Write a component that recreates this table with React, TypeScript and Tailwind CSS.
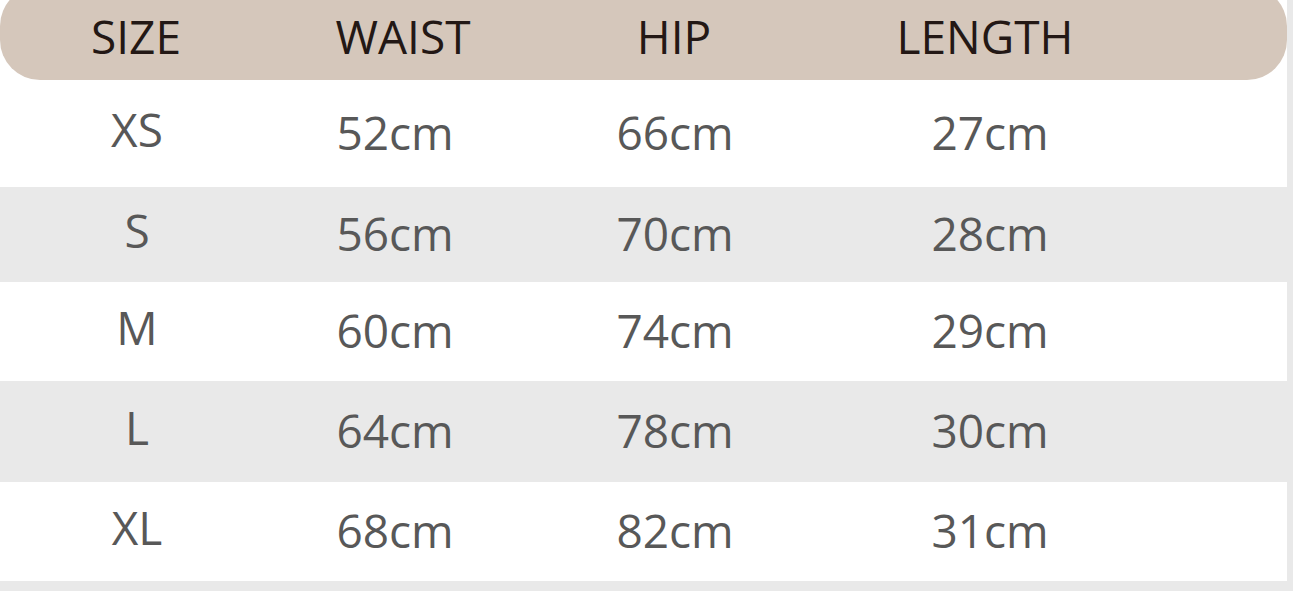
const rows = [
  { size: "XS", waist: "52cm", hip: "66cm", length: "27cm", h: "h-[107px]", bg: "bg-white" },
  { size: "S", waist: "56cm", hip: "70cm", length: "28cm", h: "h-[95px]", bg: "bg-[#e9e9e9]" },
  { size: "M", waist: "60cm", hip: "74cm", length: "29cm", h: "h-[99px]", bg: "bg-white" },
  { size: "L", waist: "64cm", hip: "78cm", length: "30cm", h: "h-[101px]", bg: "bg-[#e9e9e9]" },
  { size: "XL", waist: "68cm", hip: "82cm", length: "31cm", h: "h-[99px]", bg: "bg-white" },
];

export default function App() {
  return (
    <div className="h-[591px] w-[1293px] overflow-hidden bg-[#e9e9e9] font-['Open_Sans','Noto_Sans',sans-serif]">
      <div className="w-[1287px] bg-white">
        {/* header pill, top runs off the picture */}
        <div className="-mt-[14px] grid h-[94px] grid-cols-[272px_262px_280px_342px] items-center rounded-[40px] bg-[#d5c7bb] pt-[6px] text-[46px] leading-none text-[#231815]">
          <span className="text-center">SIZE</span>
          <span className="text-center">WAIST</span>
          <span className="text-center">HIP</span>
          <span className="text-center">LENGTH</span>
        </div>
        {rows.map((r) => (
          <div
            key={r.size}
            className={`grid grid-cols-[274px_242px_318px_312px] items-center text-[46px] leading-none text-[#585858] ${r.h} ${r.bg}`}
          >
            <span className="-mt-[10px] text-center">{r.size}</span>
            <span className="-mt-[4px] text-center">{r.waist}</span>
            <span className="-mt-[4px] text-center">{r.hip}</span>
            <span className="-mt-[4px] text-center">{r.length}</span>
          </div>
        ))}
      </div>
    </div>
  );
}
